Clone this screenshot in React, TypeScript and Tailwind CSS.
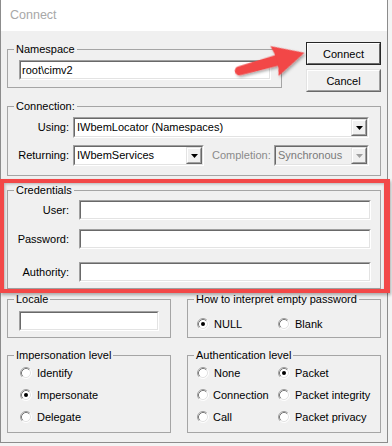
import React from "react";

function Sunken({
  className = "",
  disabled = false,
  children,
}: {
  className?: string;
  disabled?: boolean;
  children?: React.ReactNode;
}) {
  return (
    <div
      className={`border border-t-[#a0a0a0] border-l-[#a0a0a0] border-r-white border-b-white ${className}`}
    >
      <div
        className={`h-full border border-t-[#696969] border-l-[#696969] border-r-[#e3e3e3] border-b-[#e3e3e3] flex items-center ${
          disabled ? "bg-[#f0f0f0]" : "bg-white"
        }`}
      >
        {children}
      </div>
    </div>
  );
}

function Combo({
  text,
  className = "",
  disabled = false,
}: {
  text: string;
  className?: string;
  disabled?: boolean;
}) {
  return (
    <Sunken className={`h-[21px] ${className}`} disabled={disabled}>
      <span
        className={`flex-1 pl-[2px] whitespace-nowrap overflow-hidden leading-[15px] ${
          disabled ? "text-[#7a7a7a]" : "text-black"
        }`}
      >
        {text}
      </span>
      <div className="h-full w-[16px] border border-t-[#e3e3e3] border-l-[#e3e3e3] border-r-[#696969] border-b-[#696969] bg-[#f0f0f0]">
        <div className="h-full border border-t-white border-l-white border-r-[#a0a0a0] border-b-[#a0a0a0] flex items-center justify-center">
          <svg width="7" height="4" viewBox="0 0 7 4">
            <path d="M0 0H7L3.5 4Z" fill={disabled ? "#a0a0a0" : "#000"} />
          </svg>
        </div>
      </div>
    </Sunken>
  );
}

function Radio({ checked = false }: { checked?: boolean }) {
  return (
    <svg width="12" height="12" viewBox="0 0 12 12" className="shrink-0">
      <circle cx="6" cy="6" r="5" fill="#fff" />
      <path d="M2.11 9.89 A5.5 5.5 0 0 1 9.89 2.11" stroke="#a0a0a0" fill="none" />
      <path d="M9.89 2.11 A5.5 5.5 0 0 1 2.11 9.89" stroke="#ffffff" fill="none" />
      <path d="M2.82 9.18 A4.5 4.5 0 0 1 9.18 2.82" stroke="#7a7a7a" fill="none" />
      <path d="M9.18 2.82 A4.5 4.5 0 0 1 2.82 9.18" stroke="#e3e3e3" fill="none" />
      {checked && <circle cx="6" cy="6" r="2" fill="#000" />}
    </svg>
  );
}

function RadioItem({
  label,
  checked = false,
  className = "",
}: {
  label: string;
  checked?: boolean;
  className?: string;
}) {
  return (
    <div className={`flex items-center ${className}`}>
      <Radio checked={checked} />
      <span className="ml-[5px] leading-[14px]">{label}</span>
    </div>
  );
}

function Group({
  label,
  className = "",
  children,
}: {
  label: string;
  className?: string;
  children?: React.ReactNode;
}) {
  return (
    <fieldset className={`border border-[#a5a5a5] m-0 p-0 min-w-0 ${className}`}>
      <legend className="ml-[6px] px-[2px] leading-[14px] text-black">{label}</legend>
      {children}
    </fieldset>
  );
}

function Button({ label, isDefault = false }: { label: string; isDefault?: boolean }) {
  return (
    <div
      className={`w-[75px] h-[23px] border bg-[#f0f0f0] ${
        isDefault ? "border-[#262626]" : "border-t-[#e3e3e3] border-l-[#e3e3e3] border-r-[#696969] border-b-[#696969]"
      }`}
    >
      <div
        className={`h-full border flex items-center justify-center leading-[14px] ${
          isDefault
            ? "border-t-white border-l-white border-r-[#696969] border-b-[#696969]"
            : "border-t-white border-l-white border-r-[#a0a0a0] border-b-[#a0a0a0]"
        }`}
      >
        {label}
      </div>
    </div>
  );
}

export default function App() {
  return (
    <div className="relative w-[392px] h-[446px] overflow-hidden bg-[#f4f4f4] font-['Liberation_Sans',Arial,sans-serif] text-[11px] text-black">
      <div className="w-[388px] h-[443px] border-l border-r border-b border-[#8c8c8c] bg-[#f0f0f0] flex flex-col">
        <div className="h-[31px] bg-white flex items-center pl-[9px] text-[12.5px] text-[#a8a8a8] shrink-0">
          Connect
        </div>
        <div className="pl-[6px] pt-[11px] flex flex-col">
          {/* Row 1 */}
          <div className="flex items-start">
            <Group label="Namespace" className="w-[275px]">
              <div className="pt-[4px] pb-[7px] pl-[11px] pr-[10px]">
                <Sunken className="h-[20px]">
                  <span className="pl-[1px] leading-[14px]">root\cimv2</span>
                </Sunken>
              </div>
            </Group>
            <div className="ml-[24px] flex flex-col gap-[4px]">
              <Button label="Connect" isDefault />
              <Button label="Cancel" />
            </div>
          </div>

          {/* Connection */}
          <Group label="Connection:" className="w-[374px] mt-[7px]">
            <div className="pt-[4px] pb-[9px] pr-[11px] flex flex-col gap-[7px]">
              <div className="flex items-center">
                <span className="w-[61px] text-right">Using:</span>
                <Combo text="IWbemLocator (Namespaces)" className="ml-[4px] flex-1" />
              </div>
              <div className="flex items-center">
                <span className="w-[61px] text-right">Returning:</span>
                <Combo text="IWbemServices" className="ml-[4px] w-[131px]" />
                <span className="ml-[8px] text-[#8a8a8a]">Completion:</span>
                <Combo text="Synchronous" className="ml-auto w-[95px]" disabled />
              </div>
            </div>
          </Group>

          {/* Credentials */}
          <Group label="Credentials" className="w-[374px] mt-[7px]">
            <div className="pt-[3px] pb-[6px] pr-[9px] flex flex-col">
              <div className="flex items-center">
                <span className="w-[61px] text-right">User:</span>
                <Sunken className="ml-[10px] flex-1 h-[20px]" />
              </div>
              <div className="flex items-center mt-[9px]">
                <span className="w-[61px] text-right">Password:</span>
                <Sunken className="ml-[10px] flex-1 h-[20px]" />
              </div>
              <div className="flex items-center mt-[13px]">
                <span className="w-[61px] text-right">Authority:</span>
                <Sunken className="ml-[10px] flex-1 h-[20px]" />
              </div>
            </div>
          </Group>

          {/* Row 4 */}
          <div className="flex items-stretch mt-[3px]">
            <Group label="Locale" className="w-[164px]">
              <div className="pt-[5px] pb-[6px] pl-[11px] pr-[11px]">
                <Sunken className="h-[20px]" />
              </div>
            </Group>
            <Group label="How to interpret empty password" className="w-[194px] ml-[16px]">
              <div className="pt-[11px] pl-[9px] flex items-center">
                <RadioItem label="NULL" checked className="w-[81px]" />
                <RadioItem label="Blank" />
              </div>
            </Group>
          </div>

          {/* Row 5 */}
          <div className="flex items-stretch mt-[10px]">
            <Group label="Impersonation level" className="w-[164px]">
              <div className="pl-[12px] pb-[4px] flex flex-col">
                <RadioItem label="Identify" className="h-[22px]" />
                <RadioItem label="Impersonate" checked className="h-[22px]" />
                <RadioItem label="Delegate" className="h-[22px]" />
              </div>
            </Group>
            <Group label="Authentication level" className="w-[194px] ml-[16px]">
              <div className="pl-[9px] pb-[4px] grid grid-cols-[81px_auto]">
                <RadioItem label="None" className="h-[22px]" />
                <RadioItem label="Packet" checked className="h-[22px]" />
                <RadioItem label="Connection" className="h-[22px] [&>span]:ml-[4px]" />
                <RadioItem label="Packet integrity" className="h-[22px]" />
                <RadioItem label="Call" className="h-[22px] [&>span]:ml-[4px]" />
                <RadioItem label="Packet privacy" className="h-[22px]" />
              </div>
            </Group>
          </div>
        </div>
      </div>

      {/* Red highlight annotation */}
      <div className="absolute left-0 top-[179px] w-[390px] h-[114px] border-4 border-r-[6px] border-[#f24848] shadow-[inset_1px_1px_3px_rgba(0,0,0,0.25),1px_2px_3px_rgba(0,0,0,0.3)] pointer-events-none" />

      {/* Red arrow annotation */}
      <svg className="absolute left-0 top-0 pointer-events-none" width="392" height="110" viewBox="0 0 392 110">
        <defs>
          <filter id="arrowShadow" x="-20%" y="-40%" width="140%" height="180%">
            <feDropShadow dx="1" dy="2" stdDeviation="1.5" floodColor="#000" floodOpacity="0.35" />
          </filter>
        </defs>
        <g transform="translate(235 72) rotate(-15.5)" filter="url(#arrowShadow)">
          <path d="M4.5 -4.5 L44 -5.5 L44 5.5 L4.5 4.5 A4.5 4.5 0 0 1 4.5 -4.5 Z" fill="#f24646" />
          <path d="M41 -15.5 L72 0 L41 15.5 Q46 0 41 -15.5 Z" fill="#f24646" />
        </g>
      </svg>
    </div>
  );
}
